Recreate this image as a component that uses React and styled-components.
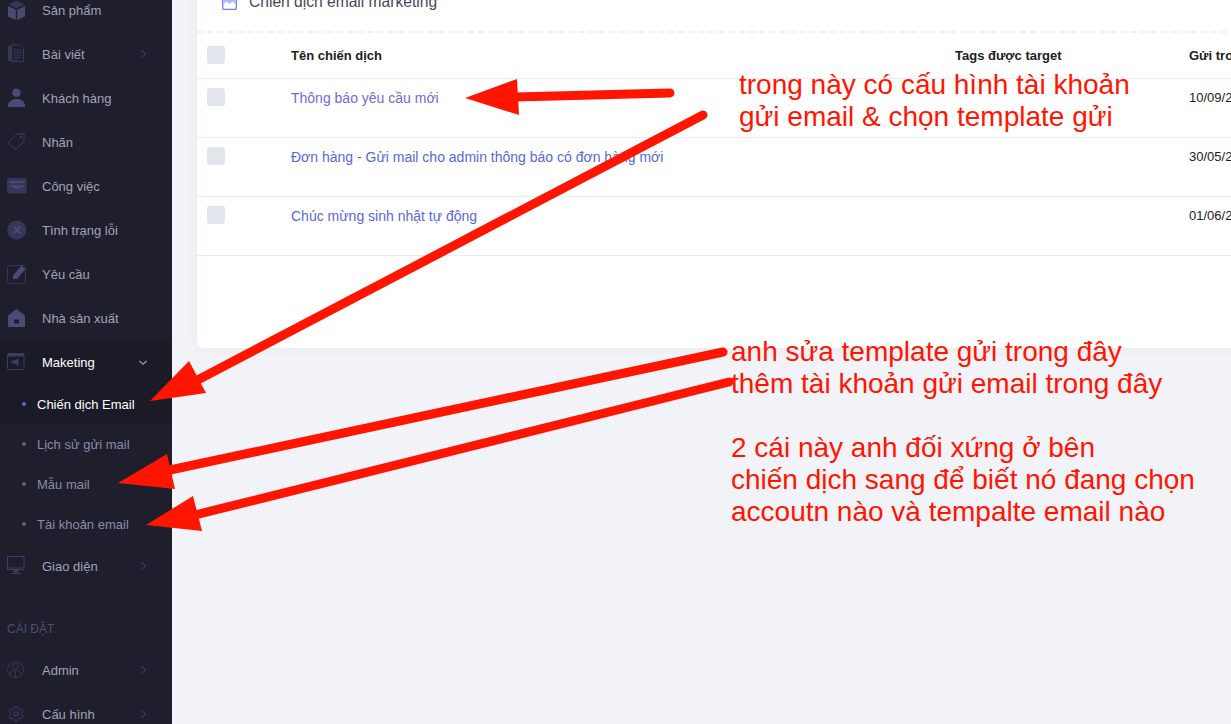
import React from 'react';
import styled, { createGlobalStyle } from 'styled-components';
import { Settings } from 'lucide-react';

const GlobalStyle = createGlobalStyle`
  html, body {
    margin: 0;
    padding: 0;
    height: 724px;
    overflow: hidden;
    background: #f2f3f8;
    font-family: "Liberation Sans", Arial, sans-serif;
  }
`;

const Page = styled.div`
  position: relative;
  display: flex;
  width: 1231px;
  height: 724px;
  overflow: hidden;
`;

const Sidebar = styled.aside`
  flex: 0 0 172px;
  height: 724px;
  overflow: hidden;
  background: #1e1e2d;
`;

const MenuList = styled.div`
  margin-top: -12px;
`;

const MenuRow = styled.div`
  display: flex;
  align-items: center;
  height: 44px;
  padding-left: 7px;
  font-size: 13px;
  background: ${(p) => (p.$open ? '#1b1b28' : 'transparent')};
  color: ${(p) => (p.$open ? '#ffffff' : '#a2a3b7')};
`;

const IconBox = styled.span`
  flex: 0 0 35px;
  height: 20px;
  display: flex;
  align-items: center;
  svg {
    display: block;
  }
`;

const MenuLabel = styled.span`
  flex: 1;
`;

const Chevron = styled.svg`
  width: 5px;
  height: 8px;
  margin-right: 26px;
  fill: none;
  stroke: #494b74;
  stroke-width: 1;
`;

const ChevronDown = styled.svg`
  width: 8px;
  height: 5px;
  margin-right: 25px;
  fill: none;
  stroke: #a2a3b7;
  stroke-width: 1.1;
`;

const SubRow = styled.div`
  display: flex;
  align-items: center;
  height: 40px;
  font-size: 13px;
  background: ${(p) => (p.$active ? '#1b1b28' : 'transparent')};
  color: ${(p) => (p.$active ? '#ffffff' : '#8b8ca3')};
`;

const Dot = styled.span`
  width: 4px;
  height: 4px;
  margin: 0 11px 0 22px;
  border-radius: 50%;
  background: ${(p) => (p.$active ? '#5867dd' : '#5e6080')};
`;

const SectionTitle = styled.div`
  height: 60px;
  padding: 33px 0 0 7px;
  box-sizing: border-box;
  font-size: 12px;
  line-height: 16px;
  color: #4c4e6f;
`;

const Main = styled.main`
  flex: 1;
  min-width: 0;
  overflow: hidden;
  padding-left: 25px;
`;

const Card = styled.section`
  width: 1100px;
  height: 377px;
  margin-top: -29px;
  background: #ffffff;
  border-radius: 6px;
  box-shadow: 0 0 13px rgba(82, 63, 105, 0.05);
`;

const CardHead = styled.div`
  display: flex;
  align-items: center;
  gap: 12px;
  height: 62px;
  padding: 1px 0 0 25px;
  box-sizing: border-box;
  border-bottom: 2px dashed #eef0f5;
  color: #48465b;
  font-size: 15.6px;
`;

const Row = styled.div`
  display: grid;
  grid-template-columns: 84px 664px 234px 1fr;
  padding: ${(p) => (p.$head ? '13px' : '9px')} 0 0 10px;
  height: ${(p) => (p.$head ? '46px' : '59px')};
  box-sizing: border-box;
  border-bottom: 1px solid #ebedf3;
  font-size: 13px;
  color: #212121;
  font-weight: ${(p) => (p.$head ? 700 : 400)};
  white-space: nowrap;
`;

const Check = styled.span`
  width: 18px;
  height: 18px;
  border-radius: 3px;
  background: #e2e5ec;
`;

const Cell = styled.span`
  line-height: ${(p) => (p.$head ? '19px' : '20px')};
`;

const CampaignLink = styled.span`
  font-size: 14px;
  line-height: 20px;
  color: ${(p) => (p.$visited ? '#7468d8' : '#5867dd')};
`;

const Overlay = styled.svg`
  position: absolute;
  inset: 0;
  width: 1231px;
  height: 724px;
  pointer-events: none;
`;

const Note = styled.div`
  position: absolute;
  left: ${(p) => p.$left}px;
  top: ${(p) => p.$top}px;
  font-size: 28px;
  line-height: 32px;
  color: #ff1500;
  white-space: pre;
`;

const ic = '#494b74';
const icDark = '#35365a';
const icLine = '#3b3d63';

const icons = {
  box: (
    <svg width="20" height="20" viewBox="0 0 20 20">
      <path d="M9.500 .5 1.500 4.500l8 4 8-4z" fill={icDark} />
      <path d="M1 6 8.800 9.800V20L1 16.600z" fill={ic} />
      <path d="M18 6 10.200 9.800V20l7.800-3.400z" fill={ic} />
    </svg>
  ),
  doc: (
    <svg width="20" height="20" viewBox="0 0 20 20">
      <path d="M1 2h3v15H1z" fill={icDark} />
      <path d="M4.500 .8h8l4 4v13h-12z" fill="none" stroke={icLine} strokeWidth=".9" />
      <path d="M6.500 6h8M6.500 8.500h8M6.500 11h8M6.500 13.500h8M6.500 16h6" stroke={icLine} strokeWidth=".9" />
    </svg>
  ),
  user: (
    <svg width="20" height="20" viewBox="0 0 20 20">
      <circle cx="9.500" cy="4.800" r="4.300" fill={ic} />
      <path d="M.8 19C.8 13.500 4.500 11 9.500 11s8.700 2.500 8.700 8z" fill={ic} />
    </svg>
  ),
  tag: (
    <svg width="20" height="20" viewBox="0 0 20 20">
      <path d="M9.500 2.500 17 1.500V9.500L9 17.500 .8 10.800z" fill="none" stroke={icLine} strokeWidth="1" />
      <circle cx="13.800" cy="5" r="1" fill={ic} />
    </svg>
  ),
  card: (
    <svg width="20" height="20" viewBox="0 0 20 20">
      <rect y="2" width="19.500" height="15.500" rx="1.500" fill={icDark} />
      <path d="M2.500 5h14.500v2H2.500z" fill={ic} />
      <path d="M2.500 9.500H17v1.300h-4l-1.500 2h-4L6 10.800H2.500z" fill={ic} />
    </svg>
  ),
  error: (
    <svg width="20" height="20" viewBox="0 0 20 20">
      <circle cx="9.800" cy="10" r="9.600" fill={icDark} />
      <path d="m6.300 6.500 7 7m0-7-7 7" stroke={ic} strokeWidth="2" />
    </svg>
  ),
  edit: (
    <svg width="20" height="20" viewBox="0 0 20 20">
      <rect x=".5" y="1.500" width="18" height="18" rx="2.500" fill="none" stroke={icDark} strokeWidth="1" />
      <path d="M6 11.500 14.500 1.500l4 3.500-8.500 10H6z" fill={ic} />
    </svg>
  ),
  home: (
    <svg width="20" height="20" viewBox="0 0 20 20">
      <path d="M9.500 1 18 7.500V19H1V7.500z" fill={ic} />
      <rect x="7" y="11.500" width="5" height="4" rx=".5" fill="#1e1e2d" />
    </svg>
  ),
  megaphone: (
    <svg width="20" height="20" viewBox="0 0 20 20">
      <rect x=".5" y="1.500" width="16.500" height="16" rx="1" fill="none" stroke={icLine} strokeWidth="1" />
      <path d="M1 1.500h16v3H1z" fill={icLine} />
      <path d="M4.500 8.500h3L11.500 6v8L7.500 11.500h-3z" fill={icLine} />
    </svg>
  ),
  monitor: (
    <svg width="20" height="20" viewBox="0 0 20 20">
      <rect x=".5" y=".5" width="16.500" height="13" fill="none" stroke={icLine} strokeWidth="1" />
      <path d="M2 11.500h13.500v1H2zM6.500 14h4.500v2.500H6.500zM4 17h9.500v1H4z" fill={icLine} />
    </svg>
  ),
  admin: (
    <svg width="20" height="20" viewBox="0 0 20 20" fill="none" stroke={icDark} strokeWidth="1">
      <circle cx="8.500" cy="9.500" r="8" />
      <circle cx="8.500" cy="6.500" r="3" />
      <path d="M8.500 9.500v8M3 15c0-3 2-4 4-4.500M14 15c0-3-2-4-4-4.500" />
    </svg>
  ),
  gear: <Settings size={18} strokeWidth={1.3} color="#3f4170" />,
};

const topItems = [
  { label: 'Sản phẩm', icon: 'box' },
  { label: 'Bài viết', icon: 'doc', arrow: true },
  { label: 'Khách hàng', icon: 'user' },
  { label: 'Nhãn', icon: 'tag' },
  { label: 'Công việc', icon: 'card' },
  { label: 'Tình trạng lỗi', icon: 'error' },
  { label: 'Yêu cầu', icon: 'edit' },
  { label: 'Nhà sản xuất', icon: 'home' },
];

const subItems = [
  { label: 'Chiến dịch Email', active: true },
  { label: 'Lịch sử gửi mail' },
  { label: 'Mẫu mail' },
  { label: 'Tài khoản email' },
];

const campaigns = [
  { name: 'Thông báo yêu cầu mới', date: '10/09/2021 10:30', visited: true },
  { name: 'Đơn hàng - Gửi mail cho admin thông báo có đơn hàng mới', date: '30/05/2021 08:15' },
  { name: 'Chúc mừng sinh nhật tự động', date: '01/06/2021 09:00' },
];

const arrows = [
  { line: '670,93 515,97', head: '465,98 517,79 519,115' },
  { line: '703,115 190,384', head: '150,401 189,361 206,393' },
  { line: '723,352 170,470', head: '118,483 167,454 175,489' },
  { line: '729,382 195,515', head: '146,525 193,496 202,531' },
];

function MenuItem({ label, icon, arrow, open }) {
  return (
    <MenuRow $open={open}>
      <IconBox>{icons[icon]}</IconBox>
      <MenuLabel>{label}</MenuLabel>
      {arrow && (
        <Chevron viewBox="0 0 5 8">
          <path d="m1 .5 3.300 3.500L1 7.500" />
        </Chevron>
      )}
      {open && (
        <ChevronDown viewBox="0 0 8 5">
          <path d="m.5 1 3.500 3.300L7.500 1" />
        </ChevronDown>
      )}
    </MenuRow>
  );
}

export default function App() {
  return (
    <Page>
      <GlobalStyle />
      <Sidebar>
        <MenuList>
          {topItems.map((item) => (
            <MenuItem key={item.label} {...item} />
          ))}
          <MenuItem label="Maketing" icon="megaphone" open />
          {subItems.map((item) => (
            <SubRow key={item.label} $active={item.active}>
              <Dot $active={item.active} />
              {item.label}
            </SubRow>
          ))}
          <MenuItem label="Giao diện" icon="monitor" arrow />
          <SectionTitle>CÀI ĐẶT</SectionTitle>
          <MenuItem label="Admin" icon="admin" arrow />
          <MenuItem label="Cấu hình" icon="gear" arrow />
        </MenuList>
      </Sidebar>
      <Main>
        <Card>
          <CardHead>
            <svg width="15" height="16" viewBox="0 0 15 16">
              <rect x=".7" y=".7" width="13.600" height="14.600" rx="1" fill="#ffffff" stroke="#6b80f5" strokeWidth="1.300" />
              <path d="M1.500 1.500h12v8.500l-3-2.500-3 2.500-3-2.500-3 2.500z" fill="#aab7fa" />
            </svg>
            Chiến dịch email marketing
          </CardHead>
          <Row $head>
            <Check />
            <Cell $head>Tên chiến dịch</Cell>
            <Cell $head>Tags được target</Cell>
            <Cell $head>Gửi trong</Cell>
          </Row>
          {campaigns.map((c) => (
            <Row key={c.name}>
              <Check />
              <CampaignLink $visited={c.visited}>{c.name}</CampaignLink>
              <span />
              <Cell>{c.date}</Cell>
            </Row>
          ))}
        </Card>
      </Main>
      <Overlay viewBox="0 0 1231 724">
        {arrows.map((a) => (
          <g key={a.line}>
            <polyline points={a.line} fill="none" stroke="#ff1500" strokeWidth="9" strokeLinecap="round" />
            <polygon points={a.head} fill="#ff1500" />
          </g>
        ))}
      </Overlay>
      <Note $left={739} $top={69}>{'trong này có cấu hình tài khoản\ngửi email & chọn template gửi'}</Note>
      <Note $left={731} $top={336}>
        {'anh sửa template gửi trong đây\nthêm tài khoản gửi email trong đây\n\n2 cái này anh đối xứng ở bên\nchiến dịch sang để biết nó đang chọn\naccoutn nào và tempalte email nào'}
      </Note>
    </Page>
  );
}
